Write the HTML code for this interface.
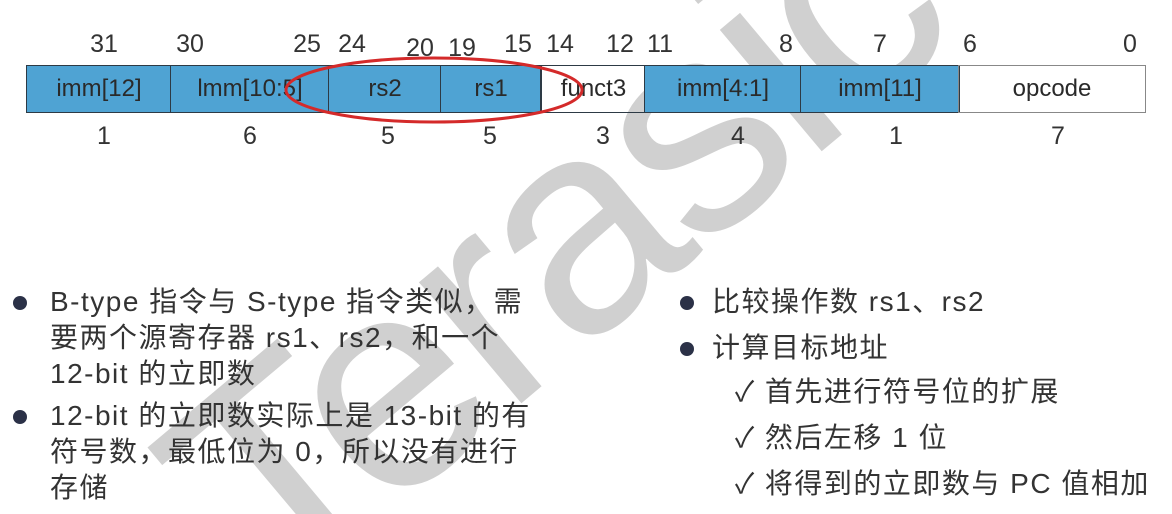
<!DOCTYPE html>
<html><head><meta charset="utf-8"><style>
body{margin:0;width:1172px;height:514px;background:#fff;position:relative;overflow:hidden;font-family:"Liberation Sans","Noto Sans CJK SC",sans-serif;color:#3c3c3c}
.n{position:absolute;font-size:25px;color:#333;transform:translateX(-50%)}
.c{position:absolute;top:65px;height:48px;border:1.5px solid #2d3a45;box-sizing:border-box;display:flex;align-items:center;justify-content:center;font-size:24px;color:#2a2a2a}
.b{background:#4fa3d3}
.t{position:absolute;font-size:28px;letter-spacing:1.5px;line-height:36px;color:#333;white-space:nowrap}
.dot{position:absolute;width:14px;height:14px;border-radius:50%;background:#2b3147}
.wm{position:absolute;left:0;top:0}
</style></head><body>
<svg class="wm" width="1172" height="514"><text x="0" y="0" transform="translate(275,610) rotate(-40)" font-family="Liberation Sans" font-size="300" fill="#d0d0d0" letter-spacing="-8">Terasic</text></svg>
<div class="n" style="left:104px;top:30px">31</div>
<div class="n" style="left:190px;top:30px">30</div>
<div class="n" style="left:307px;top:30px">25</div>
<div class="n" style="left:352px;top:30px">24</div>
<div class="n" style="left:420px;top:34px">20</div>
<div class="n" style="left:462px;top:34px">19</div>
<div class="n" style="left:518px;top:30px">15</div>
<div class="n" style="left:560px;top:30px">14</div>
<div class="n" style="left:620px;top:30px">12</div>
<div class="n" style="left:660px;top:30px">11</div>
<div class="n" style="left:786px;top:30px">8</div>
<div class="n" style="left:880px;top:30px">7</div>
<div class="n" style="left:970px;top:30px">6</div>
<div class="n" style="left:1130px;top:30px">0</div>
<div class="c b" style="left:26px;width:146px">imm[12]</div>
<div class="c b" style="left:170px;width:160px">lmm[10:5]</div>
<div class="c b" style="left:328px;width:114px">rs2</div>
<div class="c b" style="left:440px;width:102px">rs1</div>
<div class="c" style="left:540px;width:106px;border-left-width:2px">funct3</div>
<div class="c b" style="left:644px;width:158px">imm[4:1]</div>
<div class="c b" style="left:800px;width:160px">imm[11]</div>
<div class="c" style="left:958px;width:188px;border-color:#888">opcode</div>
<svg style="position:absolute;left:0;top:0" width="1172" height="160"><ellipse cx="434" cy="90" rx="148" ry="32" fill="none" stroke="#d42a2a" stroke-width="3"/></svg>
<div class="n" style="left:104px;top:122px">1</div>
<div class="n" style="left:250px;top:122px">6</div>
<div class="n" style="left:388px;top:122px">5</div>
<div class="n" style="left:490px;top:122px">5</div>
<div class="n" style="left:603px;top:122px">3</div>
<div class="n" style="left:738px;top:122px">4</div>
<div class="n" style="left:896px;top:122px">1</div>
<div class="n" style="left:1058px;top:122px">7</div>
<div class="dot" style="left:13px;top:296px"></div>
<div class="t" style="left:50px;top:284px">B-type 指令与 S-type 指令类似，需<br>要两个源寄存器 rs1、rs2，和一个<br>12-bit 的立即数</div>
<div class="dot" style="left:13px;top:410px"></div>
<div class="t" style="left:50px;top:398px">12-bit 的立即数实际上是 13-bit 的有<br>符号数，最低位为 0，所以没有进行<br>存储</div>
<div class="dot" style="left:680px;top:296px"></div>
<div class="t" style="left:712px;top:284px">比较操作数 rs1、rs2</div>
<div class="dot" style="left:680px;top:342px"></div>
<div class="t" style="left:712px;top:330px">计算目标地址</div>
<div class="t" style="left:735px;top:374px">✓&nbsp;首先进行符号位的扩展</div>
<div class="t" style="left:735px;top:420px">✓&nbsp;然后左移 1 位</div>
<div class="t" style="left:735px;top:466px">✓&nbsp;将得到的立即数与 PC 值相加</div>
</body></html>
